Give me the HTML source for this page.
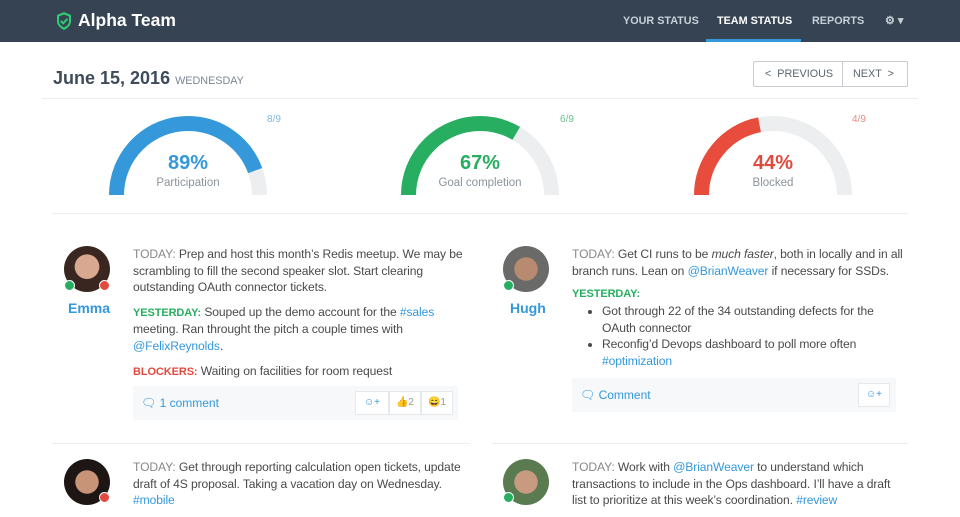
<!DOCTYPE html>
<html><head><style>
*{box-sizing:border-box;margin:0;padding:0}
body{width:960px;height:504px;overflow:hidden;background:#fff;font-family:"Liberation Sans",sans-serif;color:#555;position:relative}
.abs{position:absolute}
.hdr{left:0;top:0;width:960px;height:42px;background:#354353}
.nav{top:15px;font-size:10.8px;font-weight:bold;color:#c8d0d8}
.t{font-size:12.1px;line-height:16.6px;color:#4a4a4a;white-space:nowrap;letter-spacing:-0.1px}
.t p{margin-bottom:8px}
.lb{color:#888}
.g{color:#27ae60;font-weight:bold;font-size:11px}
.r{color:#e04a3f;font-weight:bold;font-size:11px}
.a{color:#3498db}
.av{border-radius:50%;width:46px;height:46px}
.dot{width:11px;height:11px;border-radius:50%;border:1.5px solid #fff}
.bar{background:#f6f8f9;height:34px}
.btn{background:#fff;border:1px solid #e6e9eb;height:24px;font-size:10px;color:#999;text-align:center;line-height:22px}
</style></head><body>
<div class="abs hdr"></div>
<svg class="abs" style="left:55px;top:11px" width="18" height="20" viewBox="0 0 18 20"><path d="M9 1 L16 4 V10 C16 14 13 17 9 19 C5 17 2 14 2 10 V4 Z" fill="#2ecc71"/><path d="M9 3.5 L14 5.5 V10 C14 13 12 15 9 16.5 C6 15 4 13 4 10 V5.5Z" fill="#354353"/><path d="M5.8 10 L8.2 12.3 L12.5 7.8" stroke="#2ecc71" stroke-width="2" fill="none"/></svg>
<div class="abs" style="left:78px;top:10px;font-size:17.5px;font-weight:bold;color:#fff">Alpha Team</div>
<div class="abs nav" style="left:623px">YOUR STATUS</div>
<div class="abs nav" style="left:717px;color:#fff">TEAM STATUS</div>
<div class="abs nav" style="left:812px">REPORTS</div>
<div class="abs nav" style="left:885px;font-size:11px;top:14px">⚙ ▾</div>
<div class="abs" style="left:706px;top:39px;width:95px;height:3px;background:#3498db"></div>

<div class="abs" style="left:53px;top:68px;font-size:18px;font-weight:bold;color:#3d4b5a">June 15, 2016 <span style="font-size:10.8px;font-weight:normal;color:#7a8794">WEDNESDAY</span></div>
<div class="abs" style="left:753px;top:61px;width:155px;height:26px;border:1px solid #c8ccd0;border-radius:2px;font-size:10.8px;color:#5a6570;line-height:24px">
<span class="abs" style="left:11px">&lt;&nbsp; PREVIOUS</span><span class="abs" style="left:88px;top:-1px;height:26px;border-left:1px solid #c8ccd0"></span><span class="abs" style="left:99px">NEXT &nbsp;&gt;</span></div>
<div class="abs" style="left:42px;top:98px;width:876px;height:1px;background:#eceeef"></div>

<svg class="abs" style="left:0;top:100px" width="960" height="110">
<g fill="none" stroke-width="15">
<path d="M116.5 95 A71.5 71.5 0 0 1 259.5 95" stroke="#eceeef"/>
<path d="M116.5 95 A71.5 71.5 0 0 1 259.5 95" stroke="#3498db" pathLength="100" stroke-dasharray="89 100"/>
<path d="M408.5 95 A71.5 71.5 0 0 1 551.5 95" stroke="#eceeef"/>
<path d="M408.5 95 A71.5 71.5 0 0 1 551.5 95" stroke="#27ae60" pathLength="100" stroke-dasharray="67 100"/>
<path d="M701.5 95 A71.5 71.5 0 0 1 844.5 95" stroke="#eceeef"/>
<path d="M701.5 95 A71.5 71.5 0 0 1 844.5 95" stroke="#e74c3c" pathLength="100" stroke-dasharray="44 100"/>
</g>
<g font-family="Liberation Sans" text-anchor="middle">
<text x="188" y="69" font-size="20" fill="#3498db" font-weight="bold">89%</text><text x="188" y="86" font-size="11.5" fill="#8a949c">Participation</text>
<text x="480" y="69" font-size="20" fill="#27ae60" font-weight="bold">67%</text><text x="480" y="86" font-size="11.5" fill="#8a949c">Goal completion</text>
<text x="773" y="69" font-size="20" fill="#e04a3f" font-weight="bold">44%</text><text x="773" y="86" font-size="11.5" fill="#8a949c">Blocked</text>
<text x="274" y="22" font-size="10" fill="#7fb8e6">8/9</text>
<text x="567" y="22" font-size="10" fill="#6cc08e">6/9</text>
<text x="859" y="22" font-size="10" fill="#e98a82">4/9</text>
</g></svg>
<div class="abs" style="left:52px;top:213px;width:856px;height:1px;background:#eceeef"></div>

<!-- Emma -->
<div class="abs av" style="left:64px;top:246px;background:radial-gradient(circle at 50% 45%,#d8a890 0 35%,#3a2620 37%)"></div>
<div class="abs dot" style="left:64px;top:280px;background:#27ae60"></div>
<div class="abs dot" style="left:99px;top:280px;background:#e04a3f"></div>
<div class="abs" style="left:68px;top:300px;font-size:14px;font-weight:bold;color:#3498db">Emma</div>
<div class="abs t" style="left:133px;top:246px">
<p><span class="lb">TODAY:</span> Prep and host this month’s Redis meetup. We may be<br>scrambling to fill the second speaker slot. Start clearing<br>outstanding OAuth connector tickets.</p>
<p><span class="g">YESTERDAY:</span> Souped up the demo account for the <span class="a">#sales</span><br>meeting. Ran throught the pitch a couple times with<br><span class="a">@FelixReynolds</span>.</p>
<p><span class="r">BLOCKERS:</span> Waiting on facilities for room request</p></div>
<div class="abs bar" style="left:133px;top:386px;width:325px"></div>
<div class="abs" style="left:141px;top:396px;font-size:12px;color:#3498db">🗨 1 comment</div>
<div class="abs btn" style="left:355px;top:391px;width:34px;color:#3498db">☺+</div>
<div class="abs btn" style="left:389px;top:391px;width:32px">👍2</div>
<div class="abs btn" style="left:421px;top:391px;width:32px">😄1</div>
<div class="abs" style="left:52px;top:443px;width:418px;height:1px;background:#eceeef"></div>

<div class="abs av" style="left:64px;top:459px;background:radial-gradient(circle at 50% 50%,#c89478 0 35%,#1e1614 37%)"></div>
<div class="abs dot" style="left:99px;top:492px;background:#e04a3f"></div>
<div class="abs t" style="left:133px;top:459px"><p><span class="lb">TODAY:</span> Get through reporting calculation open tickets, update<br>draft of 4S proposal. Taking a vacation day on Wednesday.<br><span class="a">#mobile</span></p></div>

<!-- Hugh -->
<div class="abs av" style="left:503px;top:246px;background:radial-gradient(circle at 50% 50%,#b88a70 0 35%,#6a6a68 37%)"></div>
<div class="abs dot" style="left:503px;top:280px;background:#27ae60"></div>
<div class="abs" style="left:510px;top:300px;font-size:14px;font-weight:bold;color:#3498db">Hugh</div>
<div class="abs t" style="left:572px;top:246px">
<p style="margin-bottom:8px"><span class="lb">TODAY:</span> Get CI runs to be <i>much faster</i>, both in locally and in all<br>branch runs. Lean on <span class="a">@BrianWeaver</span> if necessary for SSDs.</p>
<div class="g" style="line-height:15px">YESTERDAY:</div>
<ul style="padding-left:30px;margin-top:1px"><li>Got through 22 of the 34 outstanding defects for the<br>OAuth connector</li><li>Reconfig’d Devops dashboard to poll more often<br><span class="a">#optimization</span></li></ul></div>
<div class="abs bar" style="left:572px;top:378px;width:324px"></div>
<div class="abs" style="left:580px;top:388px;font-size:12px;color:#3498db">🗨 Comment</div>
<div class="abs btn" style="left:858px;top:383px;width:32px;color:#3498db">☺+</div>
<div class="abs" style="left:492px;top:443px;width:416px;height:1px;background:#eceeef"></div>

<div class="abs av" style="left:503px;top:459px;background:radial-gradient(circle at 50% 50%,#c89a80 0 35%,#5a7a50 37%)"></div>
<div class="abs dot" style="left:503px;top:492px;background:#27ae60"></div>
<div class="abs t" style="left:572px;top:459px"><p><span class="lb">TODAY:</span> Work with <span class="a">@BrianWeaver</span> to understand which<br>transactions to include in the Ops dashboard. I’ll have a draft<br>list to prioritize at this week’s coordination. <span class="a">#review</span></p></div>
</body></html>
